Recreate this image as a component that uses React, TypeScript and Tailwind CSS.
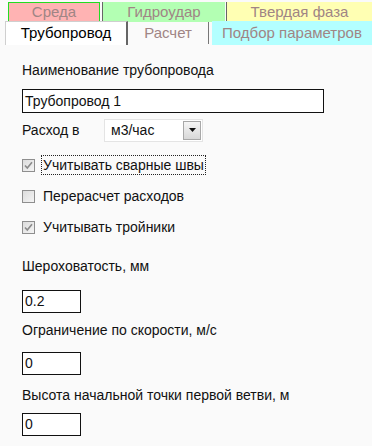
import { useState } from 'react'

const font = { fontFamily: '"Liberation Sans", Arial, sans-serif' }

function Check({ checked, label, focused }: { checked: boolean; label: string; focused?: boolean }) {
  return (
    <div className="flex h-[20px] items-center gap-[7px]">
      <span className="flex h-[13px] w-[13px] items-center justify-center border border-[#8e8e8e] bg-gradient-to-br from-[#dcdcdc] to-[#f4f4f4]">
        {checked && (
          <svg width="9" height="9" viewBox="0 0 9 9">
            <path d="M1 4.5l2.3 2.6L8 1.2" stroke="#8a8a8a" strokeWidth="1.6" fill="none" />
          </svg>
        )}
      </span>
      <span
        className={
          'px-px text-[14px] leading-[18px] text-[#111] ' +
          (focused ? 'outline-1 outline-dotted outline-[#222]' : '')
        }
      >
        {label}
      </span>
    </div>
  )
}

function SmallInput({ value }: { value: string }) {
  return (
    <div className="flex h-[23px] w-[59px] items-center border-[1.5px] border-[#111] bg-white pl-[2px] text-[14px] text-[#111]">
      {value}
    </div>
  )
}

export default function App() {
  const [name] = useState('Трубопровод 1')

  return (
    <div className="h-[446px] w-[372px] overflow-hidden bg-[#fafafa]" style={font}>
      {/* top tab row */}
      <div className="flex h-[22px] pt-[2px] text-[15px] text-[#a08585]">
        <div className="w-[8px]" />
        <div className="flex w-[92px] items-center justify-center border border-[#22dd22] bg-[#ffb3b3]">Среда</div>
        <div className="w-[2px]" />
        <div className="w-px bg-[#666]" />
        <div className="flex w-[122px] items-center justify-center bg-[#b3ffb3]">Гидроудар</div>
        <div className="w-px" />
        <div className="w-px bg-[#666]" />
        <div className="flex flex-1 items-center justify-center bg-[#ffffb3]">Твердая фаза</div>
      </div>

      {/* bottom tab row */}
      <div className="-mt-px flex h-[24px] text-[15px] text-[#a08585]">
        <div className="w-[5px]" />
        <div className="flex w-[123px] items-center justify-center border-l border-t border-r-2 border-l-[#cfcfcf] border-t-[#cfcfcf] border-r-[#666] bg-white text-black">
          Трубопровод
        </div>
        <div className="flex w-[80px] items-center justify-center">Расчет</div>
        <div className="my-px w-px bg-[#777]" />
        <div className="w-[3px]" />
        <div className="flex flex-1 items-center justify-center bg-[#b3ffff]">Подбор параметров</div>
      </div>

      {/* form */}
      <div className="flex flex-col pl-[22px] pt-[16px] text-[14px] text-[#111]">
        <p className="leading-[18px]">Наименование трубопровода</p>
        <div className="mt-[10px] flex h-[24px] w-[302px] items-center border-[1.5px] border-[#111] bg-white pl-[2px]">
          {name}
        </div>

        <div className="mt-[6px] flex h-[22px] items-center">
          <span className="w-[82px] leading-[18px]">Расход в</span>
          <div className="flex h-[23px] w-[99px] items-center justify-between border border-[#e4e4e4] bg-white pl-[6px] pr-px">
            <span>м3/час</span>
            <span className="flex h-[19px] w-[18px] items-center justify-center border border-[#a8a8a8] bg-gradient-to-b from-[#f6f6f6] to-[#d8d8d8]">
              <svg width="7" height="4" viewBox="0 0 7 4">
                <path d="M0 0h7L3.5 4z" fill="#111" />
              </svg>
            </span>
          </div>
        </div>

        <div className="mt-[14px] flex flex-col gap-[11px]">
          <Check checked label="Учитывать сварные швы" focused />
          <Check checked={false} label="Перерасчет расходов" />
          <Check checked label="Учитывать тройники" />
        </div>

        <p className="mt-[20px] leading-[18px]">Шероховатость, мм</p>
        <div className="mt-[15px]">
          <SmallInput value="0.2" />
        </div>

        <p className="mt-[8px] leading-[18px]">Ограничение по скорости, м/с</p>
        <div className="mt-[13px]">
          <SmallInput value="0" />
        </div>

        <p className="mt-[11px] leading-[18px]">Высота начальной точки первой ветви, м</p>
        <div className="mt-[9px]">
          <SmallInput value="0" />
        </div>
      </div>
    </div>
  )
}
